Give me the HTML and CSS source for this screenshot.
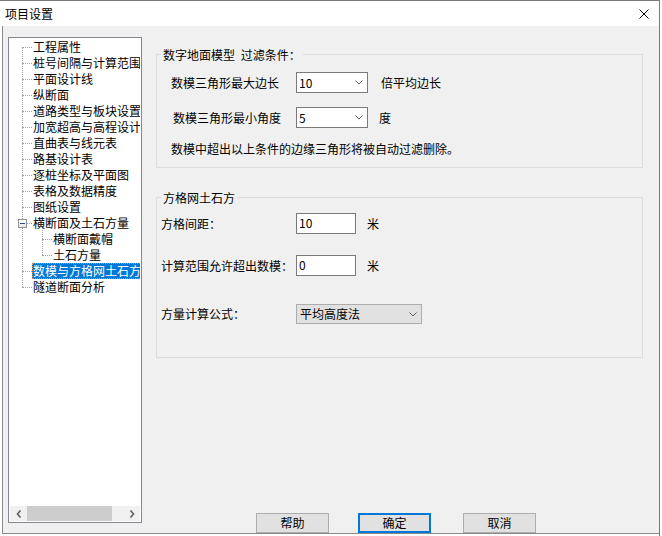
FILE: index.html
```html
<!DOCTYPE html>
<html lang="zh-CN">
<head>
<meta charset="utf-8">
<title>项目设置</title>
<link rel="stylesheet" href="styles.css">
</head>
<body>
<div class="window">
  <div class="titlebar">
    <span class="title">项目设置</span>
    <svg class="close" width="10" height="10" viewBox="0 0 10 10"><path d="M0.5 0.5 L9.5 9.5 M9.5 0.5 L0.5 9.5" stroke="#000" stroke-width="1" fill="none"/></svg>
  </div>
  <div class="client">
    <div class="tree">
      <div class="tree-body">
        <ul class="tree-root">
          <li><div class="node-row"><span class="node-label">工程属性</span></div></li>
          <li><div class="node-row"><span class="node-label">桩号间隔与计算范围</span></div></li>
          <li><div class="node-row"><span class="node-label">平面设计线</span></div></li>
          <li><div class="node-row"><span class="node-label">纵断面</span></div></li>
          <li><div class="node-row"><span class="node-label">道路类型与板块设置</span></div></li>
          <li><div class="node-row"><span class="node-label">加宽超高与高程设计</span></div></li>
          <li><div class="node-row"><span class="node-label">直曲表与线元表</span></div></li>
          <li><div class="node-row"><span class="node-label">路基设计表</span></div></li>
          <li><div class="node-row"><span class="node-label">逐桩坐标及平面图</span></div></li>
          <li><div class="node-row"><span class="node-label">表格及数据精度</span></div></li>
          <li><div class="node-row"><span class="node-label">图纸设置</span></div></li>
          <li>
            <div class="node-row"><span class="toggle"></span><span class="node-label">横断面及土石方量</span></div>
            <ul class="child-list">
              <li><div class="node-row"><span class="node-label">横断面戴帽</span></div></li>
              <li><div class="node-row"><span class="node-label">土石方量</span></div></li>
            </ul>
          </li>
          <li><div class="node-row selected"><span class="node-label">数模与方格网土石方</span></div></li>
          <li><div class="node-row"><span class="node-label">隧道断面分析</span></div></li>
        </ul>
      </div>
      <div class="hscroll">
        <span class="sb-btn"><svg width="6" height="8" viewBox="0 0 6 8"><path d="M4.5 0.5 L1.5 4 L4.5 7.5" stroke="#606060" stroke-width="1.6" fill="none"/></svg></span>
        <span class="sb-thumb"></span>
        <span class="sb-track"></span>
        <span class="sb-btn"><svg width="6" height="8" viewBox="0 0 6 8"><path d="M1.5 0.5 L4.5 4 L1.5 7.5" stroke="#606060" stroke-width="1.6" fill="none"/></svg></span>
      </div>
    </div>

    <div class="main">
      <fieldset class="group group-dtm">
        <legend>数字地面模型 过滤条件：</legend>
        <div class="row">
          <span class="label label-dtm">数模三角形最大边长</span>
          <div class="combo combo-small"><span>10</span><svg width="8" height="5" viewBox="0 0 8 5"><path d="M0.5 0.5 L4 4 L7.5 0.5" stroke="#606060" fill="none"/></svg></div>
          <span class="unit unit-wide">倍平均边长</span>
        </div>
        <div class="row row-gap14">
          <span class="label label-dtm indent2">数模三角形最小角度</span>
          <div class="combo combo-small"><span>5</span><svg width="8" height="5" viewBox="0 0 8 5"><path d="M0.5 0.5 L4 4 L7.5 0.5" stroke="#606060" fill="none"/></svg></div>
          <span class="unit">度</span>
        </div>
        <p class="note">数模中超出以上条件的边缘三角形将被自动过滤删除。</p>
      </fieldset>

      <fieldset class="group group-grid">
        <legend>方格网土石方</legend>
        <div class="row row-first">
          <span class="label label-grid">方格间距：</span>
          <input class="textbox" type="text" value="10">
          <span class="unit">米</span>
        </div>
        <div class="row row-gap21">
          <span class="label label-grid">计算范围允许超出数模：</span>
          <input class="textbox" type="text" value="0">
          <span class="unit">米</span>
        </div>
        <div class="row row-short row-gap28">
          <span class="label label-grid">方量计算公式：</span>
          <div class="combo combo-wide"><span>平均高度法</span><svg width="8" height="5" viewBox="0 0 8 5"><path d="M0.5 0.5 L4 4 L7.5 0.5" stroke="#606060" fill="none"/></svg></div>
        </div>
      </fieldset>

      <div class="buttons">
        <button class="btn" type="button">帮助</button>
        <button class="btn btn-default" type="button">确定</button>
        <button class="btn btn-last" type="button">取消</button>
      </div>
    </div>
  </div>
</div>
</body>
</html>
```

FILE: styles.css
```css
html, body {
  margin: 0;
  padding: 0;
  background: #ffffff;
}

body {
  font-family: "Noto Sans CJK SC", "Microsoft YaHei", sans-serif;
  font-size: 12px;
  color: #000;
}

.window {
  width: 660px;
  height: 536px;
  box-sizing: border-box;
  border-top: 1px solid #7a7a7a;
  border-right: 1px solid #7a7a7a;
  background: #fff;
}

.titlebar {
  height: 25px;
  display: flex;
  align-items: center;
  justify-content: space-between;
  padding: 0 10px 0 5px;
}

.title {
  line-height: 14px;
}

.close {
  display: block;
}

.client {
  margin-left: 2px;
  height: 508px;
  box-sizing: border-box;
  border-left: 1px solid #8a8a8a;
  border-bottom: 1px solid #8a8a8a;
  background: #f0f0f0;
  display: flex;
  padding: 11px 0 0 5px;
}

/* ---------- tree ---------- */
.tree {
  width: 134px;
  height: 486px;
  box-sizing: border-box;
  border: 1px solid #828790;
  background: #fff;
  padding: 1px;
  display: flex;
  flex-direction: column;
}

.tree-body {
  flex: 1;
  overflow: hidden;
}

.tree-root,
.child-list {
  list-style: none;
  margin: 0;
  padding: 0;
  position: relative;
}

.tree-root::before {
  content: "";
  position: absolute;
  left: 12px;
  top: 8px;
  bottom: 8px;
  border-left: 1px dotted #a0a0a0;
}

.child-list::before {
  content: "";
  position: absolute;
  left: 32px;
  top: -3px;
  bottom: 8px;
  border-left: 1px dotted #a0a0a0;
}

.node-row {
  position: relative;
  height: 16px;
  line-height: 16px;
  padding-left: 23px;
  white-space: nowrap;
}

.node-row::before {
  content: "";
  position: absolute;
  left: 12px;
  top: 8px;
  width: 10px;
  border-top: 1px dotted #a0a0a0;
}

.child-list .node-row {
  padding-left: 43px;
}

.child-list .node-row::before {
  left: 32px;
}

.node-label {
  display: inline-block;
  height: 16px;
  line-height: 16px;
}

.selected .node-label {
  box-sizing: border-box;
  margin-left: -1px;
  border: 1px dotted #ff8728;
  line-height: 14px;
  background: #0078d7;
  color: #fff;
}

.toggle {
  position: absolute;
  left: 8px;
  top: 4px;
  width: 9px;
  height: 9px;
  box-sizing: border-box;
  border: 1px solid #919191;
  background: linear-gradient(#ffffff, #e6e6e6);
  z-index: 1;
}

.toggle::after {
  content: "";
  position: absolute;
  left: 1px;
  top: 3px;
  width: 5px;
  height: 1px;
  background: #2b4a78;
}

.hscroll {
  height: 15px;
  display: flex;
  background: #f0f0f0;
}

.sb-btn {
  width: 17px;
  display: flex;
  align-items: center;
  justify-content: center;
}

.sb-btn svg {
  display: block;
}

.sb-thumb {
  width: 85px;
  background: #cdcdcd;
}

.sb-track {
  flex: 1;
}

/* ---------- main panel ---------- */
.main {
  margin-left: 14px;
  width: 487px;
  display: flex;
  flex-direction: column;
}

.group {
  margin: 0;
  padding: 0 0 11px 4px;
  border: 1px solid #dcdcdc;
  min-width: 0;
}

.group legend {
  padding: 0 2px;
  line-height: 13px;
  word-spacing: 3px;
}

.group-dtm {
  margin-top: 11px;
}

.group-grid {
  margin-top: 23px;
  padding-bottom: 33px;
}

.row {
  display: flex;
  align-items: center;
  height: 21px;
}

.group-dtm .row:first-of-type {
  margin-top: 11px;
}

.row-gap14 {
  margin-top: 14px;
}

.row-first {
  margin-top: 9px;
}

.row-gap21 {
  margin-top: 21px;
}

.row-gap28 {
  margin-top: 28px;
}

.row-short {
  height: 20px;
}

.label {
  flex: none;
  line-height: 14px;
  white-space: nowrap;
}

.label-dtm {
  width: 125px;
  padding-left: 10px;
}

.label-grid {
  width: 135px;
}

.indent2 {
  width: 123px;
  padding-left: 12px;
}

.combo {
  flex: none;
  display: flex;
  align-items: center;
  justify-content: space-between;
  box-sizing: border-box;
  height: 100%;
  padding: 0 4px 0 2px;
  line-height: 14px;
}

.combo svg {
  display: block;
}

.combo-small {
  width: 72px;
  border: 1px solid #7a7a7a;
  background: #fff;
}

.combo-wide {
  width: 126px;
  border: 1px solid #adadad;
  background: #e1e1e1;
  padding-left: 3px;
}

.textbox {
  flex: none;
  width: 60px;
  height: 21px;
  box-sizing: border-box;
  margin: 0;
  border: 1px solid #7a7a7a;
  background: #fff;
  padding: 0 2px 2px;
  font: inherit;
  font-size: 12px;
  line-height: 14px;
  color: #000;
  outline: none;
}

.unit {
  margin-left: 11px;
  line-height: 14px;
}

.unit-wide {
  margin-left: 13px;
}

.note {
  margin: 14px 0 0 10px;
  line-height: 14px;
}

/* ---------- buttons ---------- */
.buttons {
  margin-top: auto;
  display: flex;
  padding-left: 100px;
  gap: 29px;
}

.btn {
  width: 73px;
  height: 20px;
  box-sizing: border-box;
  margin: 0;
  padding: 0;
  border: 1px solid #adadad;
  background: #e1e1e1;
  font: inherit;
  font-size: 12px;
  line-height: 14px;
  color: #000;
}

.btn-default {
  border: 2px solid #0078d7;
}

.btn-last {
  margin-left: 3px;
}
```
